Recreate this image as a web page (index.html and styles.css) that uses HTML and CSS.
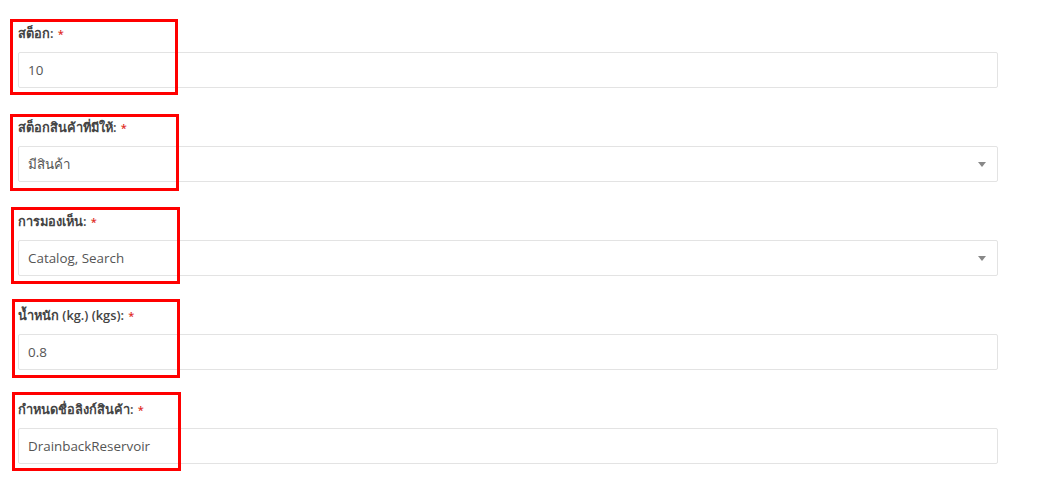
FILE: index.html
```html
<!DOCTYPE html>
<html lang="th">
<head>
<meta charset="utf-8">
<link rel="stylesheet" href="styles.css">
</head>
<body>
<div class="page">
  <form class="form">
    <div class="group">
      <label class="label">สต็อก: <span class="req">*</span></label>
      <div class="control"><span class="value">10</span></div>
    </div>
    <div class="group">
      <label class="label">สต็อกสินค้าที่มีให้: <span class="req">*</span></label>
      <div class="control select"><span class="value">มีสินค้า</span><span class="arrow"></span></div>
    </div>
    <div class="group">
      <label class="label">การมองเห็น: <span class="req">*</span></label>
      <div class="control select"><span class="value">Catalog, Search</span><span class="arrow"></span></div>
    </div>
    <div class="group">
      <label class="label">น้ำหนัก (kg.) (kgs): <span class="req">*</span></label>
      <div class="control"><span class="value">0.8</span></div>
    </div>
    <div class="group">
      <label class="label">กำหนดชื่อลิงก์สินค้า: <span class="req">*</span></label>
      <div class="control"><span class="value">DrainbackReservoir</span></div>
    </div>
  </form>
  <div class="hl hl1"></div>
  <div class="hl hl2"></div>
  <div class="hl hl3"></div>
  <div class="hl hl4"></div>
  <div class="hl hl5"></div>
</div>
</body>
</html>
```
FILE: styles.css
```css
html, body {
  margin: 0;
  padding: 0;
  background: #fff;
}
body {
  font-family: "Open Sans", "Noto Sans", sans-serif;
  color: #444;
}
.page {
  position: relative;
  width: 1046px;
  height: 481px;
  overflow: hidden;
}
.form {
  display: flex;
  flex-direction: column;
  gap: 31px;
  padding: 25px 48px 0 18px;
}
.group {
  display: flex;
  flex-direction: column;
  gap: 9px;
}
.label {
  display: block;
  height: 18px;
  font-size: 12.8px;
  font-weight: 600;
  line-height: 17px;
  color: #444;
}
.req {
  color: #e02b27;
  font-size: 11px;
  line-height: 17px;
  margin-left: 1px;
}
.control {
  box-sizing: border-box;
  height: 36px;
  border: 1px solid #e3e3e3;
  border-radius: 2px;
  display: flex;
  align-items: center;
  padding: 0 9px;
  font-size: 13.4px;
  color: #555;
}
.select {
  justify-content: space-between;
  padding-right: 11px;
}
.arrow {
  width: 0;
  height: 0;
  border-style: solid;
  border-width: 5px 4px 0 4px;
  border-color: #888 transparent transparent transparent;
}
.hl {
  position: absolute;
  box-sizing: border-box;
  border: 3px solid #ff0000;
}
.hl1 { left: 10px; top: 19px; width: 168px; height: 76px; }
.hl2 { left: 10px; top: 114px; width: 169px; height: 77px; }
.hl3 { left: 11px; top: 207px; width: 169px; height: 77px; }
.hl4 { left: 12px; top: 299px; width: 168px; height: 79px; }
.hl5 { left: 12px; top: 392px; width: 169px; height: 79px; }
```
